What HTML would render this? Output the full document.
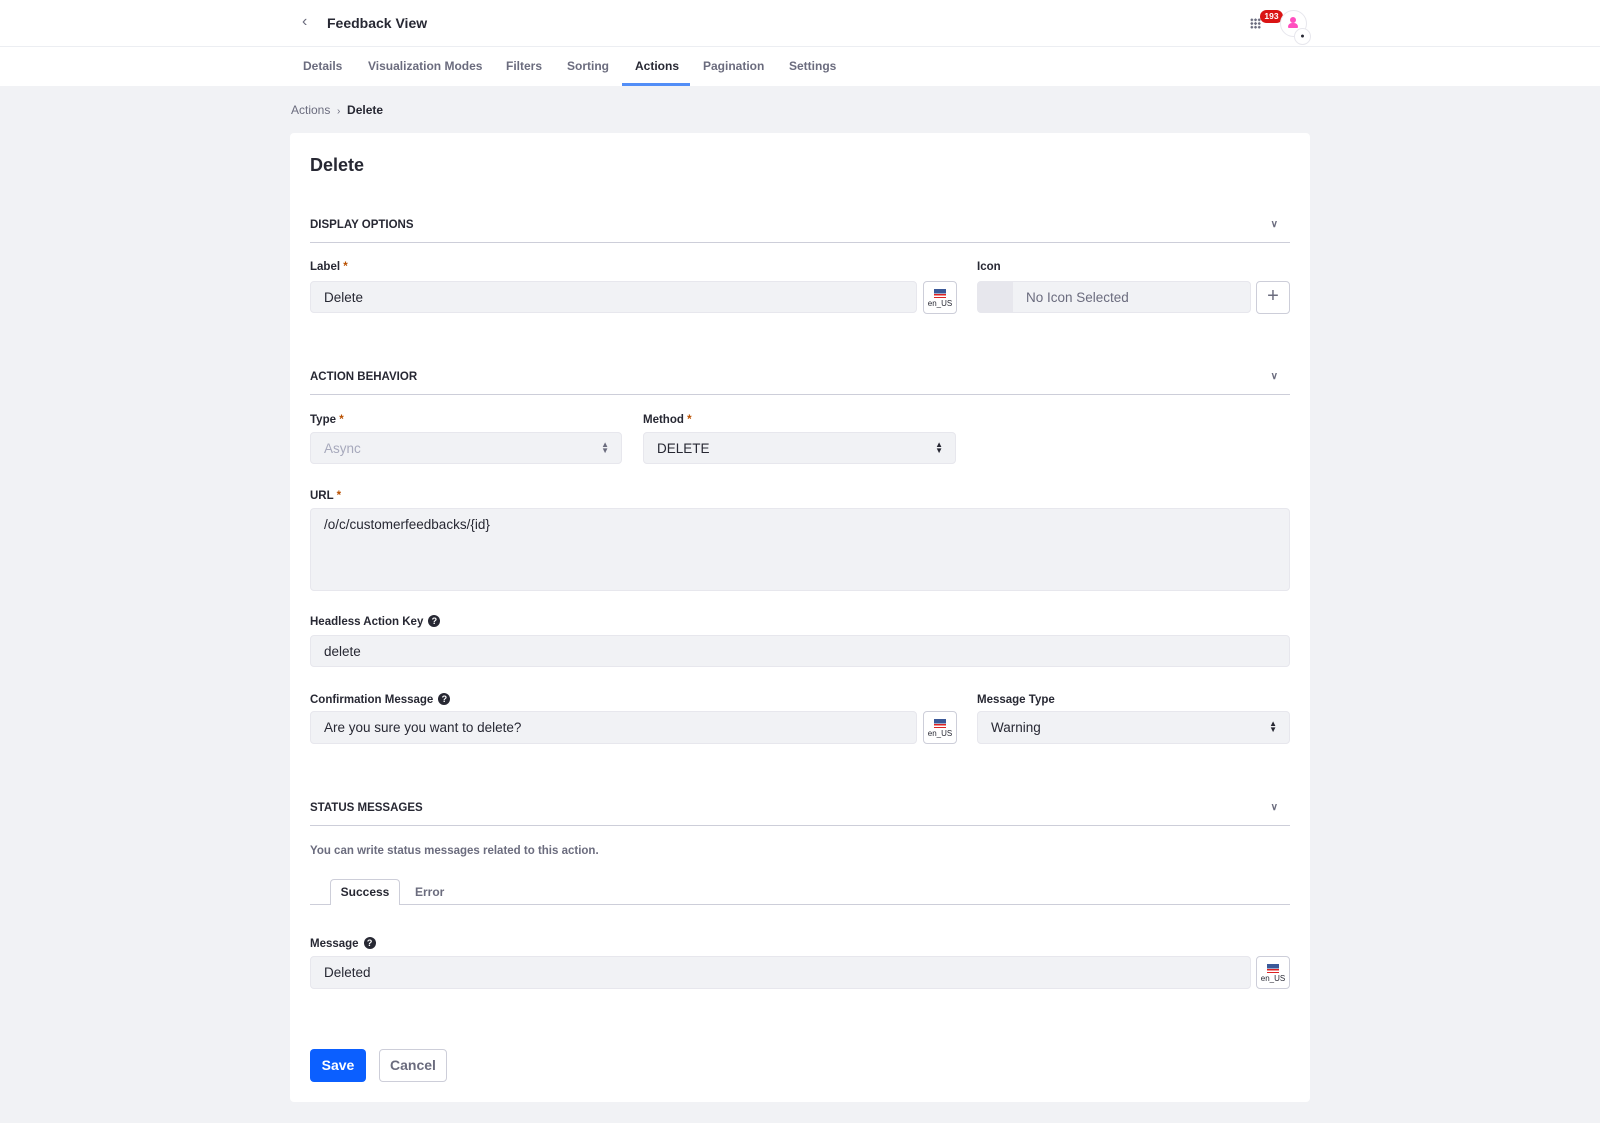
<!DOCTYPE html>
<html><head><meta charset="utf-8"><style>
*{box-sizing:border-box;margin:0;padding:0}
body{width:1600px;height:1123px;background:#f1f2f5;font-family:"Liberation Sans",sans-serif;color:#272833;position:relative;overflow:hidden}
.abs{position:absolute}
.hdr{left:0;top:0;width:1600px;height:47px;background:#fff;border-bottom:1px solid #eceef2}
.tabs{left:0;top:47px;width:1600px;height:39px;background:#fff}
.tab{position:absolute;top:12px;font-size:12px;font-weight:bold;color:#6b6c7e}
.card{left:290px;top:133px;width:1020px;height:969px;background:#fff;border-radius:4px}
.lbl{position:absolute;font-size:11.5px;font-weight:bold;color:#272833}
.lbl i{color:#b95000;font-style:normal}
.inp{position:absolute;background:#f1f2f5;border:1px solid #e7e7ed;border-radius:4px;font-size:13.5px;color:#272833;padding-left:13px;display:flex;align-items:center}
.sec{position:absolute;left:20px;width:980px;font-size:11.5px;font-weight:bold;border-bottom:1px solid #cdced9;height:24px}
.chev{position:absolute;right:12px;top:0;font-size:10px;color:#6b6c7e}
.flag{position:absolute;width:34px;height:33px;border:1px solid #cdced9;border-radius:4px;background:#fff;font-size:8px;text-align:center;color:#272833}
.flag b{display:block;width:12px;height:9px;margin:7px auto 1px;background:linear-gradient(#3b5998 0 50%,transparent 50%),repeating-linear-gradient(#d22 0 1.3px,#fff 1.3px 2.6px)}
.q{display:inline-block;width:12px;height:12px;border-radius:50%;background:#272833;color:#fff;font-size:9px;text-align:center;line-height:12px;margin-left:5px;vertical-align:1px}
.arr{position:absolute;right:12px;top:9px;font-size:8px;line-height:6px;color:#6b6c7e}
</style></head><body>
<div class="abs hdr">
<div class="abs" style="left:302px;top:13px;font-size:16px;color:#6b6c7e">&#8249;</div>
<div class="abs" style="left:327px;top:15px;font-size:14px;font-weight:bold">Feedback View</div>
<div class="abs" style="left:1250px;top:18px;width:11px;height:11px;background:radial-gradient(circle,#6b6c7e 1.2px,transparent 1.4px) 0 0/3.7px 3.7px"></div>
<div class="abs" style="left:1260px;top:10px;width:23px;height:13px;background:#da1414;border-radius:7px;color:#fff;font-size:8.5px;font-weight:bold;text-align:center;line-height:13px">193</div>
<div class="abs" style="left:1280px;top:10px;width:27px;height:27px;border:1px solid #e7e7ed;border-radius:50%;background:#fff"></div>
<div class="abs" style="left:1290px;top:17px;width:6px;height:6px;border-radius:50%;background:#ff4fbf"></div>
<div class="abs" style="left:1288px;top:23px;width:10px;height:5px;border-radius:4px 4px 1px 1px;background:#ff4fbf"></div>
<div class="abs" style="left:1294px;top:28px;width:17px;height:17px;border:1px solid #e7e7ed;border-radius:50%;background:#fff;font-size:7px;text-align:center;line-height:15px">&#9679;</div>
</div>
<div class="abs tabs">
<span class="tab" style="left:303px">Details</span>
<span class="tab" style="left:368px">Visualization Modes</span>
<span class="tab" style="left:506px">Filters</span>
<span class="tab" style="left:567px">Sorting</span>
<span class="tab" style="left:635px;color:#272833">Actions</span>
<span class="tab" style="left:703px">Pagination</span>
<span class="tab" style="left:789px">Settings</span>
<div class="abs" style="left:622px;top:36px;width:68px;height:3px;background:#528ef7"></div>
</div>
<div class="abs" style="left:291px;top:103px;font-size:12px;color:#6b6c7e">Actions &nbsp;<span style="font-size:10px">&#8250;</span>&nbsp; <b style="color:#272833">Delete</b></div>
<div class="abs card">
<div class="abs" style="left:20px;top:22px;font-size:18px;font-weight:bold">Delete</div>
<div class="sec" style="top:86px">DISPLAY OPTIONS<span class="chev">&#8744;</span></div>
<div class="lbl" style="left:20px;top:128px">Label <i>*</i></div>
<div class="inp" style="left:20px;top:148px;width:607px;height:32px">Delete</div>
<div class="flag" style="left:633px;top:148px"><b></b>en_US</div>
<div class="lbl" style="left:687px;top:128px">Icon</div>
<div class="inp" style="left:687px;top:148px;width:274px;height:32px;padding-left:48px;color:#6b6c7e"><span class="abs" style="left:0;top:0;width:35px;height:30px;background:#e7e7ed"></span>No Icon Selected</div>
<div class="flag" style="left:966px;top:148px;font-size:20px;line-height:29px;color:#6b6c7e">+</div>
<div class="sec" style="top:238px">ACTION BEHAVIOR<span class="chev">&#8744;</span></div>
<div class="lbl" style="left:20px;top:281px">Type <i>*</i></div>
<div class="inp" style="left:20px;top:299px;width:312px;height:32px;color:#a7a9bc">Async<span class="arr">&#9650;<br>&#9660;</span></div>
<div class="lbl" style="left:353px;top:281px">Method <i>*</i></div>
<div class="inp" style="left:353px;top:299px;width:313px;height:32px">DELETE<span class="arr" style="color:#272833">&#9650;<br>&#9660;</span></div>
<div class="lbl" style="left:20px;top:357px">URL <i>*</i></div>
<div class="inp" style="left:20px;top:375px;width:980px;height:83px;align-items:flex-start;padding-top:8px">/o/c/customerfeedbacks/{id}</div>
<div class="lbl" style="left:20px;top:482px">Headless Action Key<span class="q">?</span></div>
<div class="inp" style="left:20px;top:502px;width:980px;height:32px">delete</div>
<div class="lbl" style="left:20px;top:560px">Confirmation Message<span class="q">?</span></div>
<div class="inp" style="left:20px;top:578px;width:607px;height:33px">Are you sure you want to delete?</div>
<div class="flag" style="left:633px;top:578px"><b></b>en_US</div>
<div class="lbl" style="left:687px;top:561px">Message Type</div>
<div class="inp" style="left:687px;top:578px;width:313px;height:33px">Warning<span class="arr" style="color:#272833">&#9650;<br>&#9660;</span></div>
<div class="sec" style="top:669px">STATUS MESSAGES<span class="chev">&#8744;</span></div>
<div class="abs" style="left:20px;top:712px;font-size:11.5px;font-weight:bold;color:#6b6c7e">You can write status messages related to this action.</div>
<div class="abs" style="left:20px;top:771px;width:980px;height:1px;background:#cdced9"></div>
<div class="abs" style="left:40px;top:746px;width:70px;height:26px;background:#fff;border:1px solid #cdced9;border-bottom:none;border-radius:4px 4px 0 0;font-size:12px;font-weight:bold;text-align:center;line-height:24px">Success</div>
<div class="abs" style="left:125px;top:752px;font-size:12px;font-weight:bold;color:#6b6c7e">Error</div>
<div class="lbl" style="left:20px;top:804px">Message<span class="q">?</span></div>
<div class="inp" style="left:20px;top:823px;width:941px;height:33px">Deleted</div>
<div class="flag" style="left:966px;top:823px"><b></b>en_US</div>
<div class="abs" style="left:20px;top:916px;width:56px;height:33px;background:#0b5fff;border-radius:4px;color:#fff;font-size:14px;font-weight:bold;text-align:center;line-height:33px">Save</div>
<div class="abs" style="left:89px;top:916px;width:68px;height:33px;border:1px solid #cdced9;border-radius:4px;color:#6b6c7e;font-size:14px;font-weight:bold;text-align:center;line-height:31px">Cancel</div>
</div>
</body></html>
